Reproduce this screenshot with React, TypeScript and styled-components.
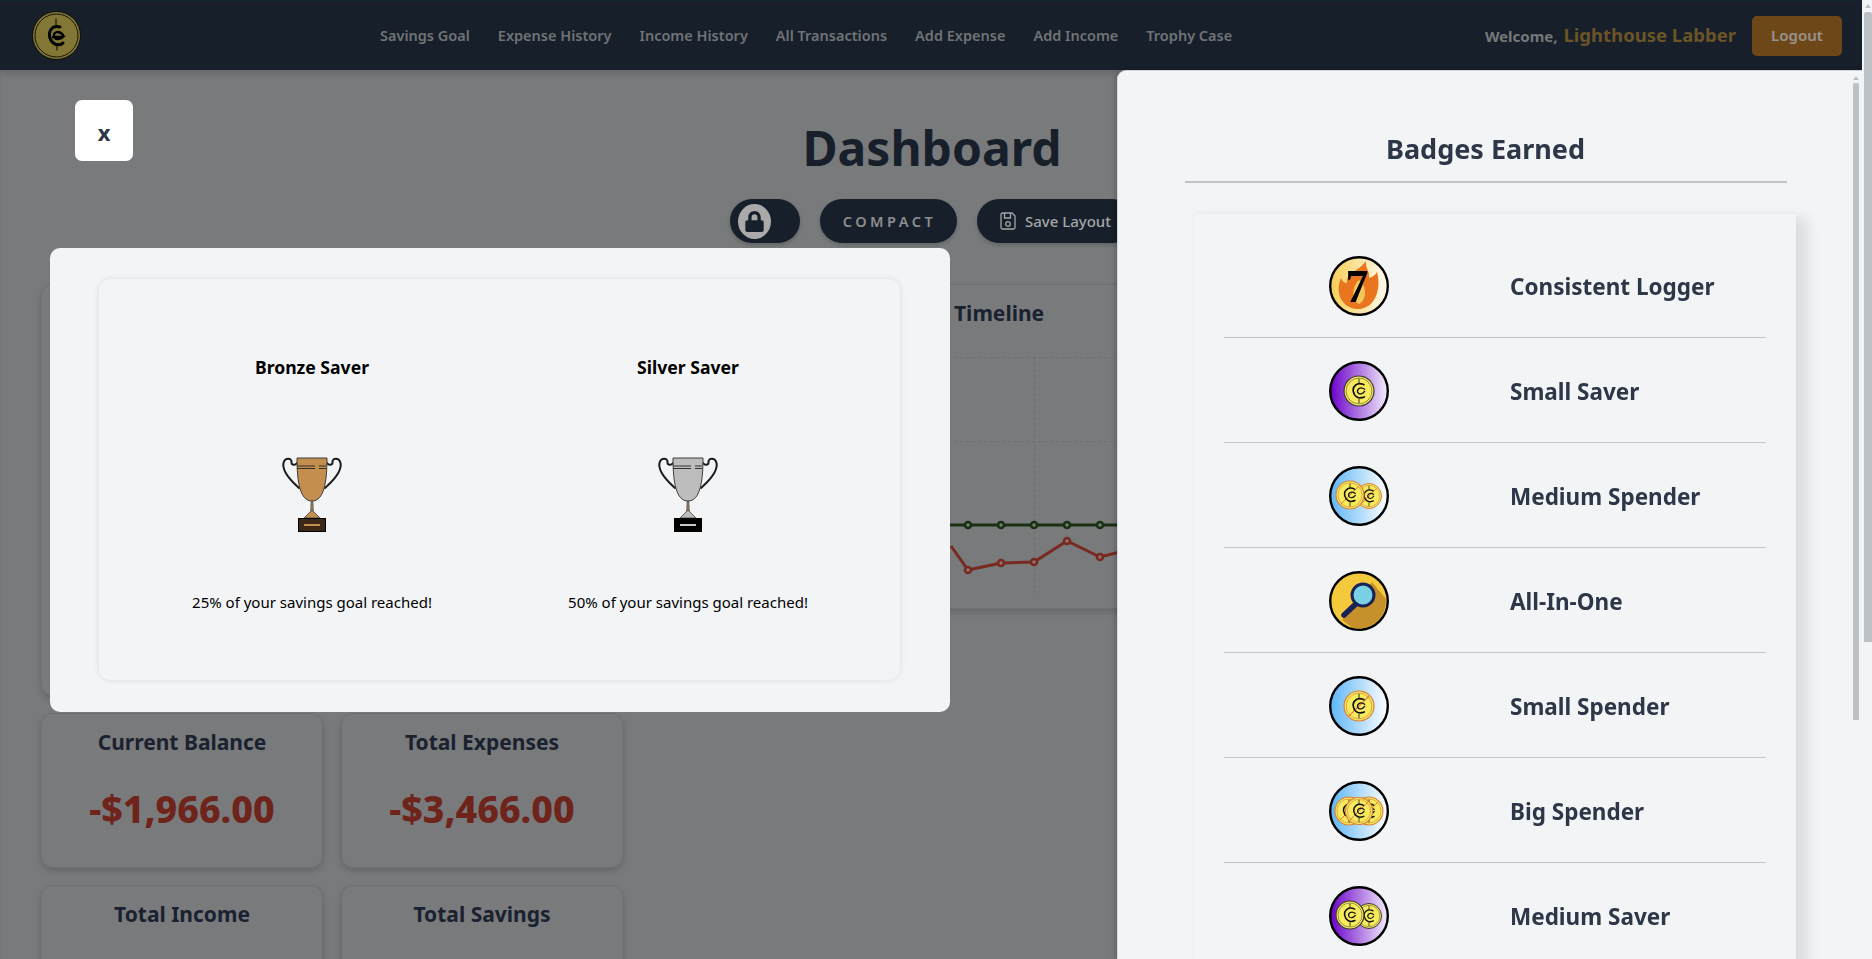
import styled, { createGlobalStyle } from 'styled-components';
import { FaLock } from 'react-icons/fa';

const GlobalStyle = createGlobalStyle`
  body {
    margin: 0;
    background: #797a7c;
    font-family: "Noto Sans", "Open Sans", Arial, sans-serif;
  }
`;

const NavBar = styled.nav`
  height: 70px;
  box-sizing: border-box;
  border-top: 1px solid #0d2733;
  background: #171f2a;
  display: flex;
  align-items: center;
  padding: 0 30px 0 32px;
  box-shadow: 0 3px 8px rgba(0, 0, 0, 0.18);
  position: relative;
`;

const NavLinks = styled.div`
  display: flex;
  gap: 28px;
  margin: 0 0 2px 299px;
`;

const NavLink = styled.a`
  font-size: 14.5px;
  font-weight: 600;
  color: #707376;
  white-space: nowrap;
`;

const UserArea = styled.div`
  margin-left: auto;
  display: flex;
  align-items: center;
`;

const Welcome = styled.span`
  font-size: 15px;
  font-weight: 700;
  color: #76787a;
  margin-right: 6px;
`;

const UserName = styled.span`
  font-size: 18.5px;
  font-weight: 700;
  color: #6b5526;
  margin: 0 16px 2px 0;
`;

const LogoutButton = styled.button`
  width: 90px;
  height: 40px;
  border: 0;
  border-radius: 5px;
  background: #6e4718;
  color: #97928c;
  font: 600 15px "Noto Sans", sans-serif;
  padding: 0 0 2px;
`;

const Main = styled.main`
  box-sizing: border-box;
  border-left: 2px solid #707a7e;
  padding: 0 8px 40px 39px;
  height: 1100px;
`;

const Title = styled.h1`
  margin: 0;
  padding: 46px 41px 0 0;
  font-size: 48px;
  line-height: 64px;
  font-weight: 700;
  color: #171f2a;
  text-align: center;
`;

const Controls = styled.div`
  display: flex;
  justify-content: center;
  gap: 20px;
  margin: 19px 0 41px -41px;
`;

const Pill = styled.button<{ $w: number }>`
  width: ${(p) => p.$w}px;
  height: 44px;
  border: 0;
  border-radius: 22px;
  background: #171f2a;
  display: flex;
  align-items: center;
  justify-content: center;
  padding: 0;
  font-family: inherit;
  box-shadow: 0 2px 4px rgba(0, 0, 0, 0.2);
`;

const LockPill = styled(Pill)`
  justify-content: flex-start;
  padding-left: 8px;
`;

const Knob = styled.span`
  width: 33px;
  height: 35px;
  border-radius: 50%;
  background: #aaaaaa;
  color: #171f2a;
  display: flex;
  align-items: center;
  justify-content: center;
  font-size: 21px;
`;

const CompactText = styled.span`
  font-size: 14.5px;
  font-weight: 600;
  letter-spacing: 3.5px;
  color: #8d8e8f;
  margin-left: 2px;
`;

const SaveText = styled.span`
  font-size: 15px;
  font-weight: 500;
  color: #a5a6a8;
  margin-left: 9px;
`;

const Grid = styled.div`
  display: grid;
  grid-template-columns: 282px 282px 900px;
  grid-template-rows: 412px 155px 155px;
  column-gap: 18px;
  row-gap: 17px;
`;

const Card = styled.section`
  box-sizing: border-box;
  background: #797a7c;
  border: 1px solid #6f7072;
  border-radius: 12px;
  box-shadow: 0 3px 7px rgba(0, 0, 0, 0.16);
  text-align: center;
`;

const LargeCard = styled(Card)`
  grid-column: 1;
`;

const TimelineCard = styled(Card)`
  grid-column: 2 / 4;
  height: 325px;
  text-align: left;
`;

const TimelineTitle = styled.h3`
  margin: 0;
  padding: 12px 0 0 612px;
  height: 46px;
  font-size: 21px;
  line-height: 32px;
  font-weight: 700;
  color: #1a2230;
`;

const StatTitle = styled.h3`
  margin: 0;
  padding-top: 12px;
  font-size: 21px;
  line-height: 32px;
  font-weight: 700;
  color: #1a2230;
`;

const StatValue = styled.div`
  margin-top: 28px;
  font-size: 37.5px;
  line-height: 46px;
  font-weight: 800;
  color: #6e241b;
`;

const Modal = styled.div`
  position: fixed;
  left: 50px;
  top: 248px;
  width: 900px;
  height: 464px;
  box-sizing: border-box;
  padding: 31px 50px 32px 49px;
  background: #f3f4f6;
  border-radius: 10px;
`;

const ModalCard = styled.div`
  height: 100%;
  box-sizing: border-box;
  padding: 0 24px 0 25px;
  background: #f3f4f6;
  border-radius: 12px;
  box-shadow: 0 0 6px rgba(0, 0, 0, 0.1);
  display: grid;
  grid-template-columns: 1fr 1fr;
`;

const Trophy = styled.div`
  display: flex;
  flex-direction: column;
  align-items: center;
  color: #000;
`;

const TrophyName = styled.h4`
  margin: 75px 0 0;
  font-size: 17.6px;
  line-height: 26px;
  font-weight: 700;
`;

const TrophyArt = styled.svg`
  margin-top: 76px;
  display: block;
`;

const TrophyText = styled.p`
  margin: 58px 0 0;
  font-size: 15px;
  line-height: 24px;
`;

const CloseButton = styled.button`
  position: fixed;
  left: 75px;
  top: 100px;
  width: 58px;
  height: 61px;
  border: 0;
  border-radius: 7px;
  background: #fff;
  color: #2d3748;
  font: 700 22px "Noto Sans", sans-serif;
  padding: 3px 0 0;
`;

const Panel = styled.aside`
  position: fixed;
  left: 1117px;
  top: 70px;
  bottom: 0;
  width: 745px;
  background: #f3f4f6;
  border-top-left-radius: 9px;
  border-left: 1px solid #d5dbe0;
  border-top: 1px solid #d0d4d8;
  box-sizing: border-box;
  padding-right: 9px;
  overflow: hidden;
  box-shadow: -2px 0 5px rgba(0, 0, 0, 0.2);
`;

const PanelTitle = styled.h2`
  margin: 0 auto;
  width: 602px;
  height: 112px;
  box-sizing: border-box;
  padding-top: 58px;
  font-size: 27px;
  line-height: 40px;
  font-weight: 700;
  text-align: center;
  color: #2d3748;
  border-bottom: 2px solid #bfc3c7;
`;

const BadgeList = styled.ul`
  list-style: none;
  margin: 31px 0 70px 76px;
  padding: 19px 30px 0;
  width: 602px;
  height: 950px;
  box-sizing: border-box;
  background: #f3f4f6;
  box-shadow: 12px 4px 12px rgba(0, 0, 0, 0.09), 0 -1px 5px rgba(0, 0, 0, 0.04);
`;

const BadgeRow = styled.li`
  height: 105px;
  box-sizing: border-box;
  border-bottom: 1px solid #c4c7cb;
  display: grid;
  grid-template-columns: 1fr 1fr;
  align-items: center;
`;

const BadgeArt = styled.svg`
  justify-self: center;
  display: block;
  margin: 1px 2px 0 0;
`;

const BadgeName = styled.span`
  padding: 3px 0 0 15px;
  font-size: 22.5px;
  font-weight: 700;
  color: #2d3748;
`;

const OuterTrack = styled.div`
  position: fixed;
  top: 0;
  right: 0;
  bottom: 0;
  width: 10px;
  background: #f3f4f6;
`;

const InnerTrack = styled.div`
  position: absolute;
  top: 0;
  right: 3px;
  bottom: 0;
  width: 6px;
`;

const ScrollArrow = styled.div<{ $top: number; $right: number }>`
  position: absolute;
  top: ${(p) => p.$top}px;
  right: ${(p) => p.$right}px;
  border-left: 3px solid transparent;
  border-right: 3px solid transparent;
  border-bottom: 4px solid #bcc1c5;
`;

const ScrollThumb = styled.div<{ $top: number; $height: number; $w: number }>`
  position: absolute;
  top: ${(p) => p.$top}px;
  right: 0;
  width: ${(p) => p.$w}px;
  height: ${(p) => p.$height}px;
  background: #bcc1c5;
  border-radius: 2px 2px 0 0;
`;

const Coin = ({ x, y, r, slash }: { x: number; y: number; r: number; slash?: boolean }) => (
  <g transform={`translate(${x} ${y}) scale(${r})`}>
    <circle r="1" fill="#f7ea5c" stroke={slash ? '#d9803a' : '#3a3a30'} strokeWidth="0.08" />
    <circle r="0.86" fill="none" stroke={slash ? '#c9782f' : '#55503a'} strokeWidth="0.04" />
    {slash && <path d="M-.68 .68 L.68 -.68" stroke="#e0763a" strokeWidth="0.07" />}
    <g fill="none" stroke="#111" strokeWidth="0.1" strokeLinecap="round" transform="scale(1.1)">
      <path d="M.3 -.38 C-.1 -.58 -.42 -.28 -.34 .04 C-.28 .36 .0 .5 .32 .36" />
      <path d="M.34 -.1 C.1 -.3 -.14 -.12 -.08 .08 C0 .22 .2 .22 .34 .02" strokeWidth="0.08" />
      <path d="M0 -.72 V-.5 M0 .5 V.72" strokeWidth="0.05" />
    </g>
  </g>
);

const Logo = () => (
  <svg width="49" height="49" viewBox="0 0 49 49">
    <circle cx="24.5" cy="24.5" r="24" fill="#827735" stroke="#0b0b08" />
    <circle cx="24.5" cy="24.5" r="21.5" fill="none" stroke="#14140c" />
    <g fill="none" stroke="#000" strokeLinecap="round">
      <path d="M24 8 V14 M25 33 V39" strokeWidth="1" />
      <path d="M28 16 C20 14 16 20 18 27 C20 33 26 36 31 32" strokeWidth="3" />
      <path d="M31 24 C27 19 21 21 22 25 C23 29 28 29 31 26 L21 26" strokeWidth="2.4" />
    </g>
  </svg>
);

const Gradient = ({ id, from, to }: { id: string; from: string; to: string }) => (
  <linearGradient id={id} x1="0" y1="0" x2="1" y2="0">
    <stop offset="0" stopColor={from} />
    <stop offset="1" stopColor={to} />
  </linearGradient>
);

const Ring = ({ fill }: { fill: string }) => (
  <circle cx="30" cy="30" r="28.8" fill={fill} stroke="#000" strokeWidth="2.4" />
);

const badges = [
  {
    name: 'Consistent Logger',
    art: (
      <>
        <Ring fill="url(#flameBg)" />
        <path
          d="M37 5 C36 12 41 15 40 22 C44 21 47 18 48 16 C52 30 48 52 30 53 C14 53 5 38 12 22 C13 25 15 27 18 27 C16 18 30 15 37 5Z"
          fill="#e9761f"
        />
        <path d="M30 24 C38 30 38 44 30 48 C23 45 22 31 30 24Z" fill="#f6c65a" />
        <text x="28" y="46" fontFamily="Liberation Serif, serif" fontWeight="700" fontSize="46" textAnchor="middle">
          7
        </text>
      </>
    ),
  },
  {
    name: 'Small Saver',
    art: (
      <>
        <Ring fill="url(#purpleBg)" />
        <Coin x={30} y={30} r={15} />
      </>
    ),
  },
  {
    name: 'Medium Spender',
    art: (
      <>
        <Ring fill="url(#blueBg)" />
        <Coin x={40} y={30} r={12.5} slash />
        <Coin x={21} y={29} r={14} slash />
      </>
    ),
  },
  {
    name: 'All-In-One',
    art: (
      <>
        <Ring fill="#f5c93c" />
        <path d="M43 11 L57 28 A27.6 27.6 0 0 1 24 57 L13 49Z" fill="#c6912a" />
        <path d="M30 30 L15 44" stroke="#1a2358" strokeWidth="5.5" strokeLinecap="round" />
        <circle cx="34" cy="24" r="11" fill="#7ad0e4" stroke="#1a2358" strokeWidth="3" />
      </>
    ),
  },
  {
    name: 'Small Spender',
    art: (
      <>
        <Ring fill="url(#blueBg)" />
        <Coin x={30} y={30} r={15} slash />
      </>
    ),
  },
  {
    name: 'Big Spender',
    art: (
      <>
        <Ring fill="url(#blueBg)" />
        <Coin x={20} y={30} r={14} slash />
        <Coin x={40} y={30} r={14} slash />
        <Coin x={30} y={30} r={13.5} slash />
      </>
    ),
  },
  {
    name: 'Medium Saver',
    art: (
      <>
        <Ring fill="url(#purpleBg)" />
        <Coin x={40} y={30} r={12.5} />
        <Coin x={21} y={29} r={14} />
      </>
    ),
  },
];

const TrophyIcon = ({ fill, base, plate }: { fill: string; base: string; plate: string }) => (
  <TrophyArt width="60" height="76" viewBox="0 0 60 76">
    <g fill="none" stroke="#1c1c1c" strokeWidth="2" strokeLinecap="round">
      <path d="M15 7 C13 10 9 9 9.500 6 C10 2 3 1 1.500 7 C0 14 8 24 17 32" />
      <path d="M45 7 C47 10 51 9 50.500 6 C50 2 57 1 58.500 7 C60 14 52 24 43 32" />
    </g>
    <path d="M29 45 H31 L31.500 56 H28.500Z" fill="#8b7658" stroke="#555" strokeWidth="0.5" />
    <path d="M30 54 L38 62 H22Z" fill={fill} stroke="#3c3c3c" strokeWidth="0.8" />
    <path d="M15 2 H45 C45 26 42 45 30 45 C18 45 15 26 15 2Z" fill={fill} stroke="#3c3c3c" strokeWidth="1" />
    <path d="M15 10 H33 M37 10 H44 M15 12.500 H33 M37 12.500 H44" stroke="#222" strokeWidth="0.9" />
    <rect x="16.500" y="62.500" width="27" height="13" fill={base} stroke="#000" />
    <rect x="22" y="68" width="16" height="2" fill={plate} />
  </TrophyArt>
);

const redPoints = [
  [609, 203],
  [626, 227],
  [659, 220],
  [692, 219],
  [725, 198],
  [758, 214],
  [790, 206],
];

const TimelineChart = () => (
  <svg width="800" height="260" viewBox="0 0 800 260">
    <g stroke="#6d6e6e" strokeDasharray="3 3" fill="none">
      <path d="M0 14.500 H800 M0 98.500 H800 M692.500 14 V251" />
    </g>
    <path d="M560 182 H800" stroke="#1a3010" strokeWidth="3" />
    {[626, 659, 692, 725, 758].map((x) => (
      <circle key={x} cx={x} cy="182" r="3" fill="#76807a" stroke="#1a3010" strokeWidth="2.6" />
    ))}
    <polyline
      points={redPoints.map((p) => p.join(',')).join(' ')}
      fill="none"
      stroke="#782a20"
      strokeWidth="3"
    />
    {redPoints.slice(1, 6).map(([x, y]) => (
      <circle key={x} cx={x} cy={y} r="3" fill="#8f7672" stroke="#782a20" strokeWidth="2.6" />
    ))}
  </svg>
);

const App = () => {
  return (
    <>
      <GlobalStyle />
      <NavBar>
        <Logo />
        <NavLinks>
          {['Savings Goal', 'Expense History', 'Income History', 'All Transactions', 'Add Expense', 'Add Income', 'Trophy Case'].map(
            (label) => (
              <NavLink key={label}>{label}</NavLink>
            ),
          )}
        </NavLinks>
        <UserArea>
          <Welcome>Welcome,</Welcome>
          <UserName>Lighthouse Labber</UserName>
          <LogoutButton>Logout</LogoutButton>
        </UserArea>
      </NavBar>
      <Main>
        <Title>Dashboard</Title>
        <Controls>
          <LockPill $w={70}>
            <Knob>
              <FaLock />
            </Knob>
          </LockPill>
          <Pill $w={137}>
            <CompactText>COMPACT</CompactText>
          </Pill>
          <Pill $w={157}>
            <svg width="16" height="18" viewBox="0 0 16 18" fill="none" stroke="#a5a6a8" strokeWidth="1.3">
              <path d="M1 2.500 A1.500 1.500 0 0 1 2.500 1 H12 L15 4 V15.500 A1.500 1.500 0 0 1 13.500 17 H2.500 A1.500 1.500 0 0 1 1 15.500Z" />
              <path d="M4.500 1 V6 H10.500 V1" />
              <circle cx="8" cy="12" r="2.300" />
            </svg>
            <SaveText>Save Layout</SaveText>
          </Pill>
        </Controls>
        <Grid>
          <LargeCard />
          <TimelineCard>
            <TimelineTitle>Timeline</TimelineTitle>
            <TimelineChart />
          </TimelineCard>
          <Card>
            <StatTitle>Current Balance</StatTitle>
            <StatValue>-$1,966.00</StatValue>
          </Card>
          <Card>
            <StatTitle>Total Expenses</StatTitle>
            <StatValue>-$3,466.00</StatValue>
          </Card>
          <span />
          <Card>
            <StatTitle>Total Income</StatTitle>
          </Card>
          <Card>
            <StatTitle>Total Savings</StatTitle>
          </Card>
        </Grid>
      </Main>

      <CloseButton>x</CloseButton>
      <Modal>
        <ModalCard>
          <Trophy>
            <TrophyName>Bronze Saver</TrophyName>
            <TrophyIcon fill="#c48f4e" base="#3d2716" plate="#c68e4d" />
            <TrophyText>25% of your savings goal reached!</TrophyText>
          </Trophy>
          <Trophy>
            <TrophyName>Silver Saver</TrophyName>
            <TrophyIcon fill="#bdbdbd" base="#000" plate="#c8c8c8" />
            <TrophyText>50% of your savings goal reached!</TrophyText>
          </Trophy>
        </ModalCard>
      </Modal>

      <Panel>
        <PanelTitle>Badges Earned</PanelTitle>
        <BadgeList>
          {badges.map((badge) => (
            <BadgeRow key={badge.name}>
              <BadgeArt width="60" height="60" viewBox="0 0 60 60">
                {badge.art}
              </BadgeArt>
              <BadgeName>{badge.name}</BadgeName>
            </BadgeRow>
          ))}
        </BadgeList>
        <InnerTrack>
          <ScrollArrow $top={5} $right={0} />
          <ScrollThumb $top={12} $height={637} $w={6} />
        </InnerTrack>
      </Panel>

      <OuterTrack>
        <ScrollArrow $top={4} $right={1} />
        <ScrollThumb $top={12} $height={630} $w={8} />
      </OuterTrack>

      <svg width="0" height="0" style={{ position: 'absolute' }}>
        <defs>
          <Gradient id="flameBg" from="#f6cf55" to="#fffaf0" />
          <Gradient id="purpleBg" from="#6a00c8" to="#f3eefc" />
          <Gradient id="blueBg" from="#5db5f5" to="#ffffff" />
        </defs>
      </svg>
    </>
  );
};

export default App;
